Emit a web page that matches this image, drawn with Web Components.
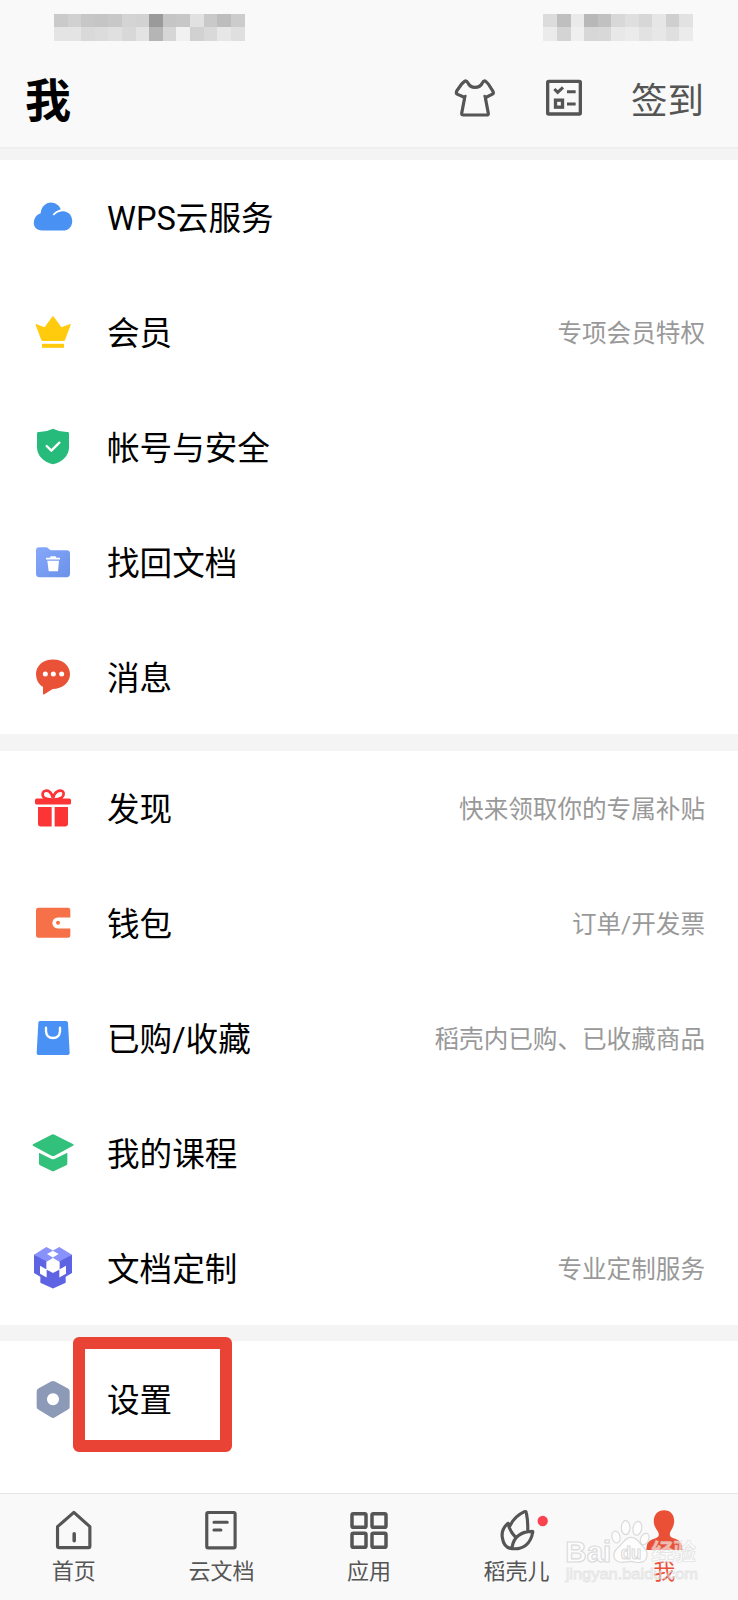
<!DOCTYPE html>
<html lang="zh-CN">
<head>
<meta charset="utf-8">
<title>我</title>
<style>
html,body{margin:0;background:#fff}
body{font-family:Roboto,"Noto Sans CJK SC",sans-serif;width:738px;height:1600px;overflow:hidden}
</style>
</head>
<body>
<me-page></me-page>
<script>
const define = (name, html, setup) => {
  const t = document.createElement('template');
  t.innerHTML = html;
  customElements.define(name, class extends HTMLElement {
    constructor() {
      super();
      this.attachShadow({ mode: 'open' }).append(t.content.cloneNode(true));
    }
    connectedCallback() { if (setup) setup(this, this.shadowRoot); }
  });
};

const stroke = w => `fill="none" stroke="#555" stroke-width="${w}" stroke-linejoin="round" stroke-linecap="round"`;
const ICONS = {
  shirt: ['250 229 132 132', `<path ${stroke(9.5)} d="M286 244L276 253L261 274Q258 281 264 284L282 292Q285 294 284 299L276 341Q276 346 281 346H351Q357 346 356 341L348 299Q347 294 351 292L367 284Q373 281 370 275L356 253L347 244Q341 243 338 250Q332 263 316 263Q301 263 295 250Q291 243 286 244Z"/><path ${stroke(8)} d="M287 289L284 300M345 289L348 300"/>`],
  task: ['519 229 132 132', `<rect ${stroke(10)} x="536" y="245" width="98" height="98" rx="3"/><path fill="none" stroke="#555" stroke-width="9" d="M556 268L566 278L582 263M594 276H620M594 313H620"/><rect x="559.500" y="301.500" width="21" height="21" fill="none" stroke="#555" stroke-width="10"/>`],
  cloud: ['93 46.200 132 132', `<path fill="#4991f2" d="M128 153Q113 153 105 143Q99 134 103 120Q108 105 122 101Q124 78 143 70Q162 65 175 78Q180 83 182 90Q167 93 158 105L162 108Q172 96 187 95Q205 95 213 109Q220 124 214 138Q207 151 194 153Z"/>`],
  crown: ['93 390.600 132 132', `<path fill="#ffcb0c" stroke="#ffcb0c" stroke-width="3" stroke-linejoin="round" d="M108 434Q122 440 134 444L159 410L184 444L211 434L193 482H126Z"/><path fill="#ffcb0c" d="M126 492H192V504H126Z"/>`],
  shield: ['93 735 132 132', `<path fill="#26bb7b" d="M159 746Q181 757 204 756Q207 757 207 761V803Q205 839 159 853Q113 839 111 803V761Q111 757 114 756Q137 757 159 746Z"/><path fill="none" stroke="#fff" stroke-width="7" stroke-linecap="round" stroke-linejoin="round" d="M140 798L154 812L178 788"/>`],
  folder: ['93 119.400 132 132', `<defs><linearGradient id="g" x1="0" y1="0" x2="1" y2="1"><stop stop-color="#86a8fb"/><stop offset="1" stop-color="#6a91e9"/></linearGradient></defs><path fill="url(#g)" d="M118 141H137Q142 141 145 145L152 150H200Q210 150 210 160V221Q210 231 200 231H118Q108 231 108 221V151Q108 141 118 141Z"/><path fill="#fff" d="M153 168H166Q169 168 169 173H180V178H138V173H150Q150 168 153 168ZM142 182H177L174 213H146Z"/>`],
  message: ['93 463.800 132 132', `<path fill="#e95236" d="M159 477C188 477 210 495 210 521C210 548 187 565 158 566L132 582Q129 583 129 579V560Q108 547 108 521C108 495 130 477 159 477Z"/><g fill="#fff"><circle cx="136" cy="521" r="7.500"/><circle cx="160" cy="521" r="7.500"/><circle cx="185" cy="521" r="7.500"/></g>`],
  gift: ['93 79.200 132 132', `<g fill="#fd3436"><rect x="105" y="117" width="108" height="18" rx="5"/><path d="M114 142H155V201H122Q114 201 114 192ZM164 142H204V192Q204 201 196 201H164Z"/></g><path fill="none" stroke="#fd3436" stroke-width="8" d="M156 120C147 118 126 120 128 102C130 92 142 91 148 96Q156 102 159 116Q162 102 171 96C180 91 190 92 191 102C192 119 171 119 160 120"/>`],
  wallet: ['93 423.600 132 132', `<path fill="#f67147" d="M115 444H204Q211 444 211 451V473H174Q157 475 157 490Q158 505 174 506H211V527Q211 534 204 534H115Q108 534 108 527V451Q108 444 115 444Z"/><circle cx="174" cy="489" r="6" fill="#f67147"/>`],
  bag: ['93 768 132 132', `<path fill="#4991f5" d="M120 783H198Q203 783 204 788L209 879Q209 885 203 885H115Q110 885 110 879L115 788Q115 783 120 783Z"/><path fill="none" stroke="#fff" stroke-width="7" stroke-linecap="round" d="M138 803V814Q140 834 159 834Q178 834 180 814V803"/>`],
  course: ['93 122.400 132 132', `<path fill="#31c17b" d="M156 133Q159 131 162 133L220 162Q223 165 219 167L165 196Q159 199 153 196L99 167Q96 165 99 162ZM117 188L153 206Q159 209 165 206L202 188V220Q202 223 199 225L164 242Q159 245 154 242L120 225Q117 223 117 220Z"/>`],
  custom: ['93 467.800 132 132', `<path fill="#5d63e2" d="M102 494L140 505H178L216 494V549L197 560V578L159 595L121 578V560L102 549Z"/><path fill="#8992fa" d="M102 494L139 471L159 481L178 471L216 494L178 514L159 504L140 514Z"/><path fill="#fff" d="M158.500 482L176 492L158.500 502L141 492ZM159 504L179 515V538L159 549L139 538V515ZM120 527L140 538V562L120 551ZM198 527L178 538V562L198 551Z"/>`],
  settings: ['93 199.200 132 132', `<path fill="#8c99b7" fill-rule="evenodd" d="M153 213Q159 209 165 213L204 234Q209 237 209 242V289Q209 294 204 297L165 320Q159 324 153 320L115 297Q110 294 110 289V242Q110 237 115 234ZM159 248A18 18 0 1 0 159.010 248Z"/>`],
  home: ['149.400 588 144 144', `<path ${stroke(9.5)} d="M221 607L269 650V709Q269 713 265 713H177Q172 713 172 709V650Z"/><path ${stroke(10.5)} d="M222 671V692"/>`],
  doc: ['592.200 588 144 144', `<rect ${stroke(9.5)} x="621.500" y="607.500" width="85" height="106" rx="4"/><path ${stroke(9)} d="M643 637H683M643 660H664"/>`],
  apps: ['195 78 144 144', `<g ${stroke(10.5)}><rect x="216" y="101" width="42" height="41" rx="4"/><rect x="276" y="101" width="42" height="41" rx="4"/><rect x="216" y="160" width="42" height="42" rx="4"/><rect x="276" y="160" width="42" height="42" rx="4"/></g>`],
  leaf: ['67.800 78 144 144', `<path ${stroke(9.5)} d="M119 137C127 119 145 103 162 95Q167 93 168 99Q173 125 172 153M113 130Q91 148 96 174C99 194 110 205 126 206C160 209 181 190 187 157Q188 153 184 154C153 154 129 171 125 202M113 130C116 146 124 160 136 172"/><circle cx="217" cy="123" r="15.500" fill="#f94350"/>`],
  person: ['510.600 78 144 144', `<path fill="#ea5036" d="M583 91C604 91 614 107 613 126C611 145 602 151 600 161C599 171 607 173 618 177Q638 184 638 210H530Q528 186 548 178C559 174 568 171 567 162C566 152 553 144 552 126C551 106 563 91 583 91Z"/>`]
};

define('app-icon', `<style>:host{display:block;flex:none;width:44px;height:44px}svg{display:block;width:100%;height:100%;overflow:visible}</style><svg></svg>`,
  (el, root) => {
    const icon = ICONS[el.getAttribute('name')];
    if (!icon) return;
    const svg = root.querySelector('svg');
    svg.setAttribute('viewBox', icon[0]);
    svg.innerHTML = icon[1];
  });

define('pixel-strip', `<style>:host{display:grid;grid-auto-rows:13.600px}</style>`,
  (el, root) => {
    const rows = el.getAttribute('shades').split('|').map(r => r.trim().split(' '));
    el.style.gridTemplateColumns = `repeat(${rows[0].length},13.620px)`;
    rows.flat().forEach(c => {
      const d = document.createElement('div');
      d.style.background = '#' + c + c + c;
      root.append(d);
    });
  });

define('page-header', `<style>
:host{display:flex;flex-direction:column;height:147px;background:#f9f9f9;border-bottom:2px solid #efefef}
.status{display:flex;flex:none;justify-content:space-between;padding:13.600px 45px 0 54px;height:49px;box-sizing:border-box}
.bar{display:flex;align-items:center;height:98px;padding:0 34px 0 25px}
h1{margin:0 auto 0 0;font-size:46px;font-weight:700;line-height:60px;color:#000;position:relative;top:3px}
.check{margin-left:45.500px}
.sign{margin-left:45px;font-size:36.500px;line-height:50px;color:#555;position:relative;top:4px}
</style>
<div class="status">
<pixel-strip shades="ca d1 c7 c5 c8 d4 d2 9a c5 c7 e1 c9 bd cc|e4 e4 d9 dc e0 d8 e3 b5 d6 f1 d1 d9 e7 df"></pixel-strip>
<pixel-strip shades="dc bf ea b8 c1 d8 df d7 e6 cf e2|eb d4 ef d7 d8 e8 eb e2 e7 df eb"></pixel-strip>
</div>
<div class="bar"><h1>我</h1><app-icon name="shirt"></app-icon><app-icon class="check" name="task"></app-icon><span class="sign">签到</span></div>`);

define('menu-row', `<style>
:host{display:flex;align-items:center;height:114.800px;padding:0 33px 0 31px;box-sizing:border-box}
.label{margin-left:32px;font-size:32.600px;line-height:44px;color:#000;white-space:nowrap;position:relative;top:2px}
.hint{margin-left:auto;font-size:24.600px;line-height:36px;color:#999;white-space:nowrap;position:relative;top:2px}
</style><app-icon></app-icon><span class="label"><slot></slot></span><span class="hint"><slot name="hint"></slot></span>`,
  (el, root) => {
    const icon = document.createElement('app-icon');
    icon.setAttribute('name', el.getAttribute('icon'));
    root.querySelector('app-icon').replaceWith(icon);
  });

define('menu-group', `<style>:host{display:block;background:#fff;height:574px;border-top:var(--gap,17px) solid #f4f4f4}</style><slot></slot>`);

define('focus-frame', `<style>:host{position:absolute;display:block;box-sizing:border-box;left:72.500px;top:1336.500px;width:159.500px;height:115.500px;border:12px solid #e94335;border-radius:6px}</style>`);

define('tab-item', `<style>
:host{flex:1;display:flex;flex-direction:column;align-items:center;padding-top:12px;color:#555}
:host([active]){color:#ea5036}
app-icon{width:48px;height:48px}
span{font-size:22px;line-height:30px;margin-top:3px}
</style><app-icon></app-icon><span><slot></slot></span>`,
  (el, root) => {
    const icon = document.createElement('app-icon');
    icon.setAttribute('name', el.getAttribute('icon'));
    root.querySelector('app-icon').replaceWith(icon);
  });

define('site-watermark', `<style>:host{position:absolute;left:560px;top:1516px;width:144px;height:68px}svg{display:block;overflow:visible}</style>
<svg width="144" height="68" viewBox="270 108 432 204" fill="#fff" fill-opacity=".6" stroke="#cfcfcf" stroke-opacity=".75" stroke-width="3.500" font-family="Liberation Sans" font-weight="700">
<text x="286" y="245" font-size="90" textLength="138" lengthAdjust="spacingAndGlyphs">Bai</text>
<ellipse cx="438" cy="171" rx="12" ry="18" transform="rotate(-15 438 171)"/><ellipse cx="467" cy="143" rx="13" ry="21"/><ellipse cx="502" cy="145" rx="13" ry="21" transform="rotate(10 502 145)"/><ellipse cx="524" cy="177" rx="12" ry="18" transform="rotate(25 524 177)"/>
<path d="M484 172C503 172 508 190 522 203C538 219 532 246 511 247C498 249 494 244 482 244C469 244 463 250 448 246C428 241 426 219 443 204C459 190 464 172 484 172Z"/>
<text x="452" y="236" font-size="54" textLength="62" lengthAdjust="spacingAndGlyphs">du</text>
<text x="544" y="241" font-size="68" font-family="Noto Sans CJK SC" textLength="134" stroke-opacity=".5" stroke-width="2.500">经验</text>
<text x="287" y="297" font-size="42" textLength="397" lengthAdjust="spacingAndGlyphs" font-weight="400" fill-opacity=".4" stroke-opacity=".5" stroke-width="2.500">jingyan.baidu.com</text>
</svg>`);

define('tab-bar', `<style>:host{display:flex;height:107px;box-sizing:border-box;background:#f9f9f9;border-top:1px solid #e5e5e5}</style>
<tab-item icon="home">首页</tab-item><tab-item icon="doc">云文档</tab-item><tab-item icon="apps">应用</tab-item><tab-item icon="leaf">稻壳儿</tab-item><tab-item icon="person" active>我</tab-item>`);

define('me-page', `<style>
:host{display:flex;flex-direction:column;position:relative;width:738px;height:1600px;background:#fff;overflow:hidden}
page-header,menu-group,tab-bar{flex:none}
.first{--gap:11px}
.last{--gap:16px;height:auto;flex:1}
.last menu-row{height:116px}
</style>
<page-header></page-header>
<menu-group class="first">
<menu-row icon="cloud">WPS云服务</menu-row>
<menu-row icon="crown">会员<span slot="hint">专项会员特权</span></menu-row>
<menu-row icon="shield">帐号与安全</menu-row>
<menu-row icon="folder">找回文档</menu-row>
<menu-row icon="message">消息</menu-row>
</menu-group>
<menu-group>
<menu-row icon="gift">发现<span slot="hint">快来领取你的专属补贴</span></menu-row>
<menu-row icon="wallet">钱包<span slot="hint">订单/开发票</span></menu-row>
<menu-row icon="bag">已购/收藏<span slot="hint">稻壳内已购、已收藏商品</span></menu-row>
<menu-row icon="course">我的课程</menu-row>
<menu-row icon="custom">文档定制<span slot="hint">专业定制服务</span></menu-row>
</menu-group>
<menu-group class="last"><menu-row icon="settings">设置</menu-row></menu-group>
<tab-bar></tab-bar>
<focus-frame></focus-frame>
<site-watermark></site-watermark>`);
</script>
</body>
</html>
